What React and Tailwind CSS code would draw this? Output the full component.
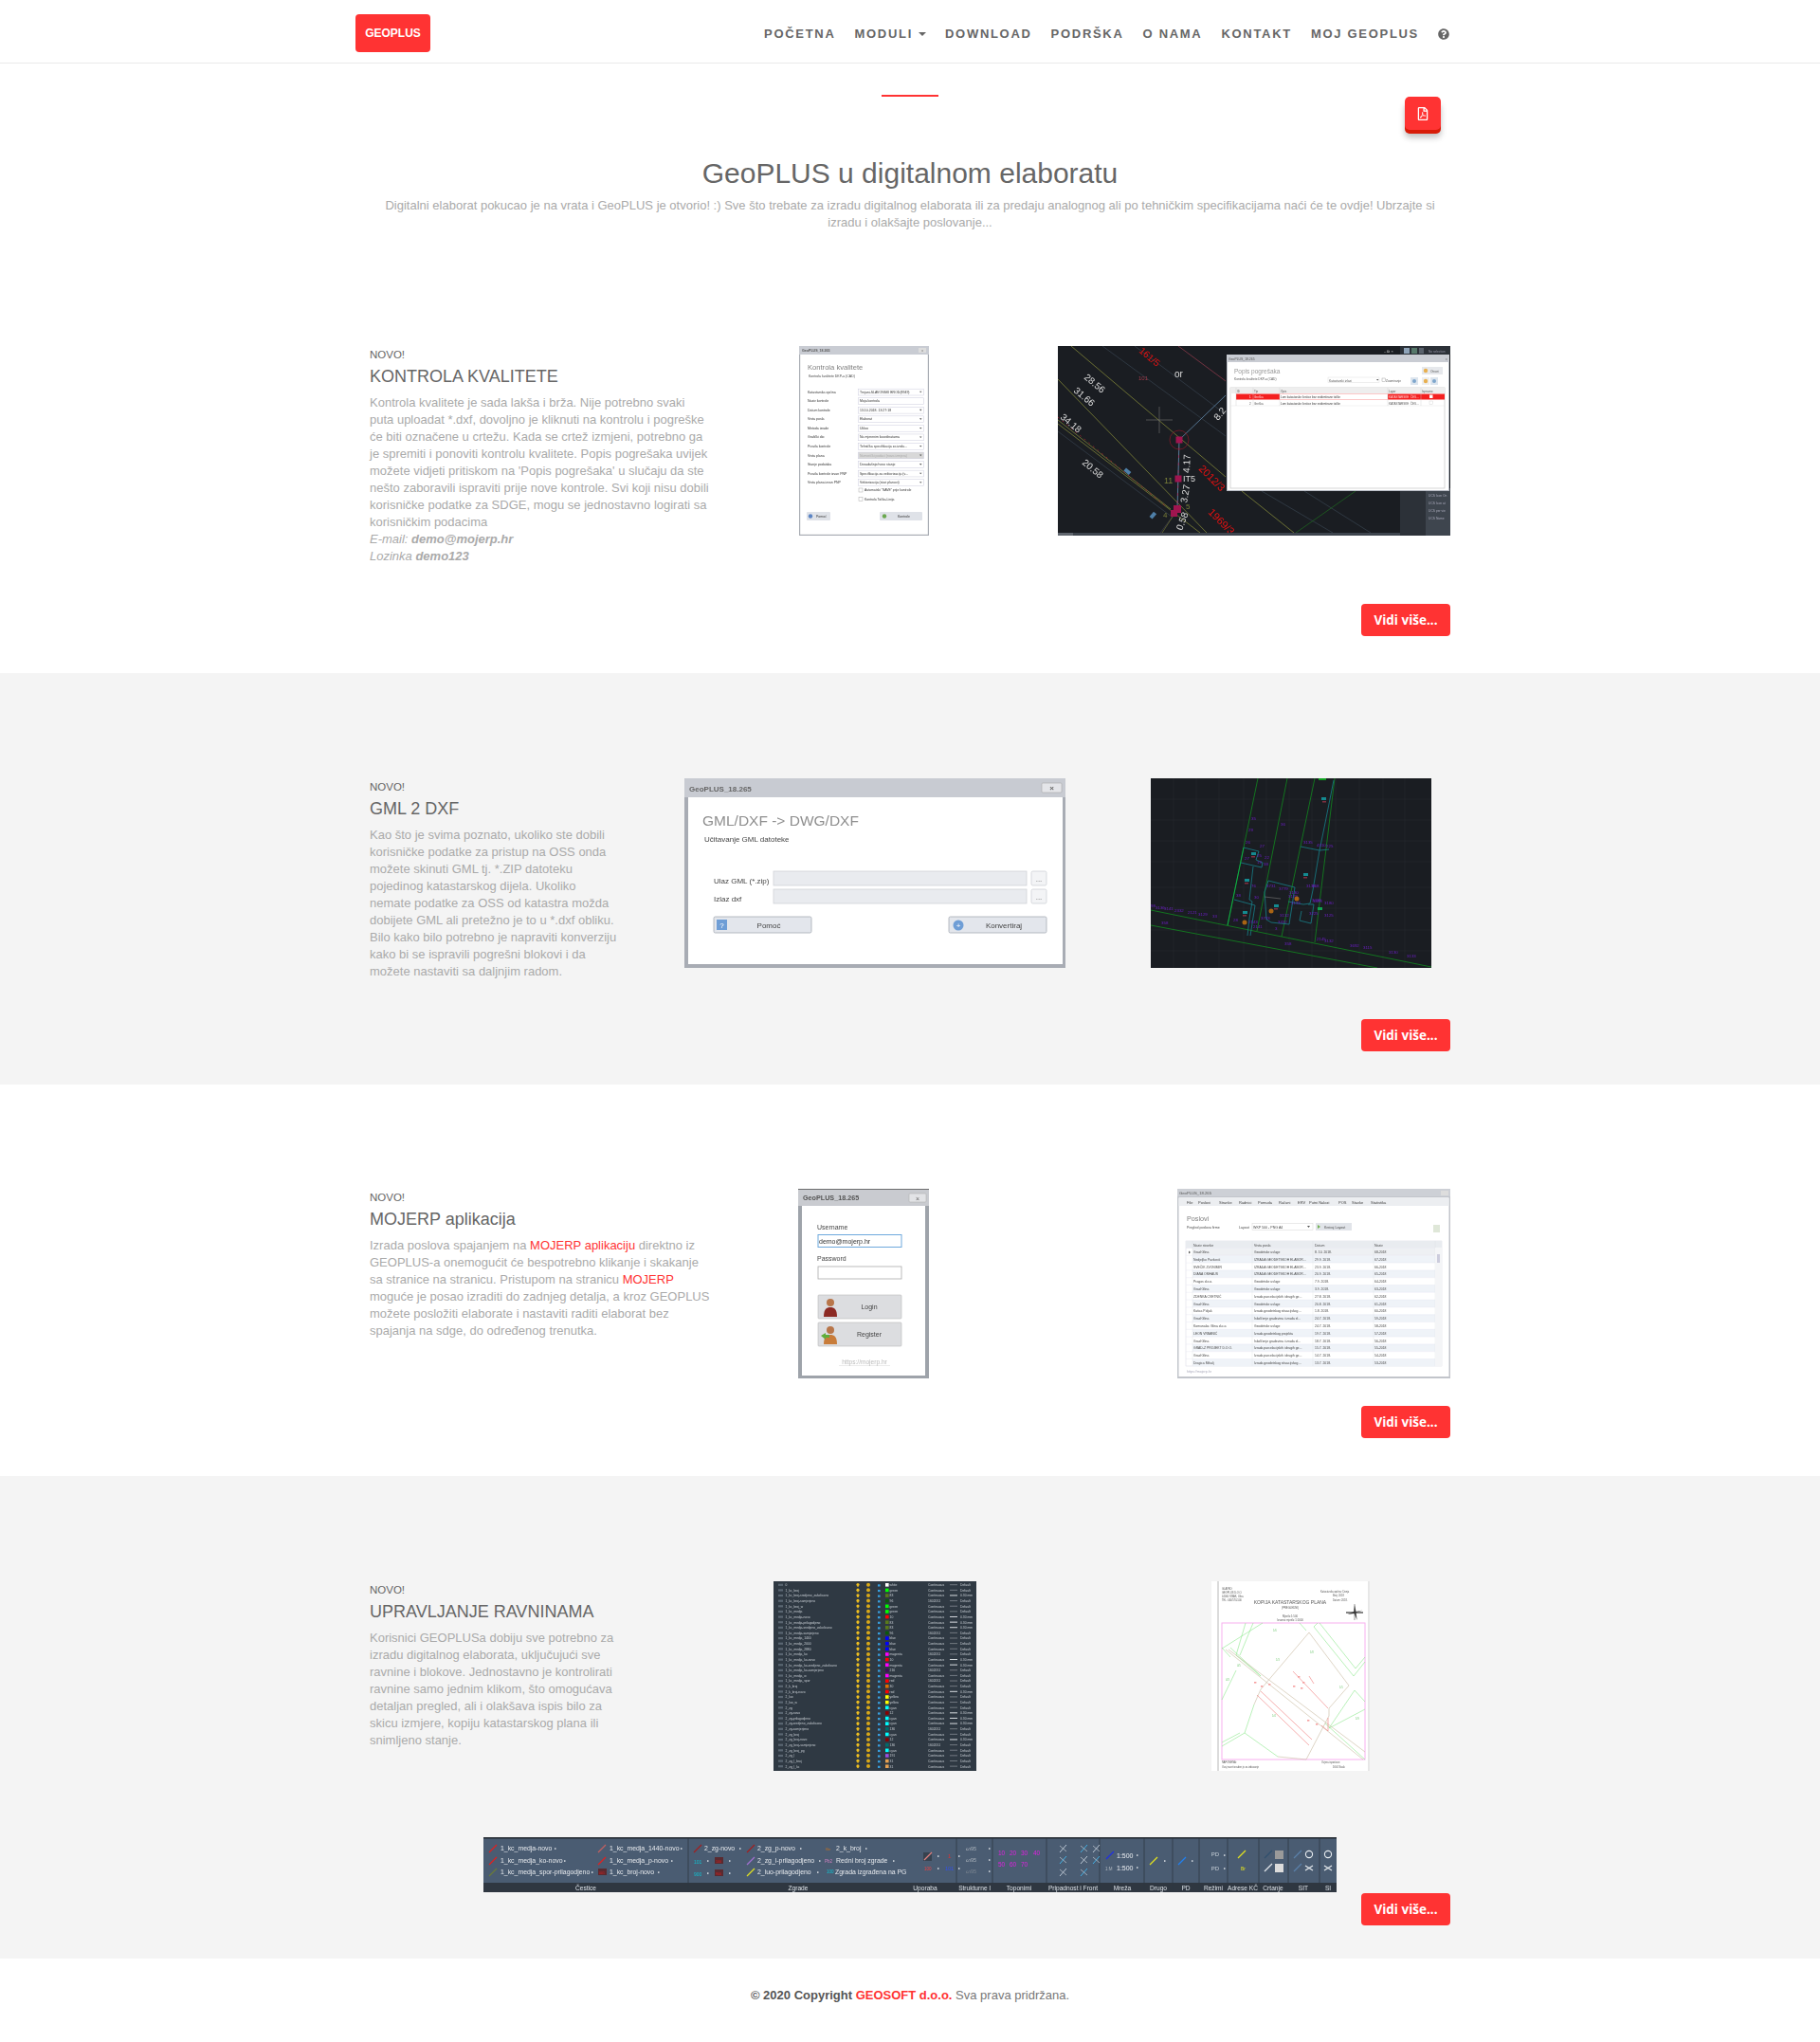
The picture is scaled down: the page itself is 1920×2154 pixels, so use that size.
import React from "react";
import { FaRegFilePdf, FaQuestionCircle } from "react-icons/fa";

const T = ({ x, y, s = 4, c = "#555", w, a, r, children, o }) => (
  <text x={x} y={y} fontSize={s} fill={c} fontWeight={w} textAnchor={a} opacity={o} transform={r ? `rotate(${r} ${x} ${y})` : undefined}>{children}</text>
);
const L = ({ p, c = "#888", w = 0.6, d }) => (
  <line x1={p[0]} y1={p[1]} x2={p[2]} y2={p[3]} stroke={c} strokeWidth={w} strokeDasharray={d} />
);

function KontrolaShot() {
  const rows = [
    ["Katastarska općina", "Trnjani-SLAVONSKI BROD(8949)", 1],
    ["Naziv kontrole", "Moja kontrola", 0],
    ["Datum kontrole", "13.10.2018. 13:27:18", 1],
    ["Vrsta posla", "Elaborat", 1],
    ["Metoda izrade", "Ukloo", 1],
    ["Grafički dio", "Na mjerenim koordinatama", 1],
    ["Pravila kontrole", "Tehnička specifikacija za izrdu...", 1],
    ["Vrsta plana", "Numerički podaci (nova izmjera)", 2],
    ["Stanje podataka", "Dosadašnje/novo stanje", 1],
    ["Pravila kontrole izvan PNP", "Specifikacija za vektorizaciju (v...", 1],
    ["Vrsta plana izvan PNP", "Vektorizacija (stari planovi)", 1],
  ];
  return (
    <svg viewBox="0 0 137 200" className="block w-[137px] h-[200px] blur-[0.3px]">
      <rect width="137" height="200" fill="#a9adb4" />
      <rect x="0" y="0" width="137" height="9" fill="#c9ccd3" />
      <rect x="1.2" y="9" width="134.6" height="189.8" fill="#fff" />
      <T x="3" y="6" s="3.6" c="#555" w="700">GeoPLUS_18.265</T>
      <rect x="126" y="2" width="8" height="5" fill="#ddd" />
      <T x="130" y="6" s="3.5" a="middle" c="#666">x</T>
      <T x="9" y="25" s="7.6" c="#808080">Kontrola kvalitete</T>
      <T x="10" y="33" s="3.5" c="#444">Kontrola kvalitete DKP-a (CAD)</T>
      {rows.map((r, i) => {
        const y = 48.5 + i * 9.55;
        return (
          <g key={i}>
            <T x="9" y={y + 1.2} s="3.5" c="#333">{r[0]}</T>
            <rect x="62.5" y={y - 3.3} width="69" height="6.8" fill={r[2] === 2 ? "#d8d8d8" : "#fff"} stroke="#ccd" strokeWidth="0.5" />
            <T x="64" y={y + 1.2} s="3.5" c={r[2] === 2 ? "#aaa" : "#333"}>{r[1]}</T>
            {r[2] > 0 && <path d={`M127 ${y - 0.8}h2.5l-1.25 1.6z`} fill="#555" />}
          </g>
        );
      })}
      <rect x="63" y="150" width="4" height="4" fill="#fff" stroke="#aaa" strokeWidth="0.5" />
      <T x="69" y="153.4" s="3.4" c="#333">Automatski "SAVE" prije kontrole</T>
      <rect x="63" y="159.6" width="4" height="4" fill="#fff" stroke="#aaa" strokeWidth="0.5" />
      <T x="69" y="163" s="3.4" c="#333">Kontrola Točka-Linija</T>
      <rect x="8" y="175" width="25" height="9" rx="1" fill="#dfe2e8" />
      <circle cx="12" cy="179.5" r="2.2" fill="#5b84c4" />
      <T x="18" y="181" s="3.5" c="#333">Pomoć</T>
      <rect x="85" y="175" width="45" height="9" rx="1" fill="#dfe2e8" />
      <circle cx="90" cy="179.5" r="2.2" fill="#6aa84f" />
      <T x="104" y="181" s="3.5" c="#333">Kontrole</T>
    </svg>
  );
}

function CadShot() {
  const labels = [
    ["28.56", 41, 34, 40], ["31.66", 30, 48, 40], ["34.18", 16, 76, 40], ["20.58", 39, 124, 40],
  ];
  return (
    <svg viewBox="0 0 414 200" className="block w-[414px] h-[200px] blur-[0.3px]">
      <rect width="414" height="200" fill="#1a1d22" />
      <L p={[14, 0, 177, 138]} c="#7f8438" w={0.8} />
      <L p={[194, 153, 249, 197]} c="#7f8438" w={0.8} />
      <L p={[0, 35, 157, 197]} c="#7f8438" w={0.8} />
      <L p={[0, 78, 119, 172]} c="#7f8438" w={0.8} />
      <L p={[0, 82, 150, 197]} c="#7f8438" w={0.8} />
      <L p={[47, 0, 177, 95]} c="#3d4a58" />
      <L p={[81, 0, 177, 72]} c="#3d4a58" />
      <L p={[127, 0, 177, 37]} c="#8a3a4a" w={0.8} />
      <L p={[0, 90, 120, 180]} c="#3d4a58" />
      <L p={[0, 75, 115, 170]} c="#a02030" w={0.8} d="2 4" />
      <L p={[215, 153, 290, 197]} c="#3d4a58" />
      <L p={[260, 153, 330, 197]} c="#3d4a58" />
      <L p={[251, 197, 314, 153]} c="#1e7a1e" />
      <L p={[107, 64, 107, 92]} c="#777" />
      <L p={[93, 78, 121, 78]} c="#777" />
      <L p={[128, 99, 177, 52]} c="#5b7f9e" w={0.9} />
      <L p={[128, 99, 126, 172]} c="#5b7f9e" w={1} />
      <L p={[128, 99, 126, 172]} c="#c02050" w={0.6} d="3 5" />
      <L p={[123, 177, 108, 197]} c="#445" />
      <L p={[123, 177, 110, 197]} c="#7f8438" />
      <circle cx="128" cy="99" r="10" fill="none" stroke="#8a1a2a" strokeWidth="0.7" />
      <rect x="124.5" y="95.5" width="7" height="7" fill="#a0154f" />
      <rect x="123.5" y="136.5" width="7" height="7" fill="#a0154f" />
      <rect x="122" y="168" width="8" height="8" fill="#a0154f" />
      <rect x="119" y="173" width="7" height="7" fill="#a0154f" />
      <rect x="70" y="130" width="7" height="4" fill="#4e7fa8" transform="rotate(40 73 132)" />
      <rect x="97" y="177" width="7" height="4" fill="#4e7fa8" transform="rotate(-50 100 179)" />
      {labels.map((l) => <T key={l[0]} x={l[1] - 14} y={l[2]} s="10" c="#ddd" r={l[3]}>{l[0]}</T>)}
      <T x="85" y="36" s="6" c="#a03a4a">101</T>
      <T x="123" y="33" s="10" c="#ddd">or</T>
      <T x="85" y="6" s="10" c="#e81010" r="40">161/5</T>
      <T x="169" y="79" s="10" c="#ddd" r="-50">8.2</T>
      <T x="139" y="134" s="10" c="#ddd" r="-88">4.17</T>
      <T x="136" y="166" s="10" c="#ddd" r="-80">3.27</T>
      <T x="131" y="195" s="10" c="#ddd" r="-70">0.58</T>
      <T x="112" y="145" s="9" c="#7a7f3a">11</T>
      <T x="132" y="143" s="9" c="#ddd">IT5</T>
      <T x="135" y="172" s="8" c="#7a7f3a">5</T>
      <T x="111" y="181" s="8" c="#7a7f3a">4</T>
      <T x="148" y="130" s="11" c="#e81010" r="45">2012/3</T>
      <T x="158" y="176" s="11" c="#e81010" r="45">1969/3</T>
      <rect x="361" y="150" width="53" height="50" fill="#3e454e" />
      <rect x="361" y="150" width="27" height="50" fill="#2c3138" />
      <rect y="197" width="361" height="3" fill="#3e454e" />
      <rect x="0" y="197" width="16" height="3" fill="#60666e" />
      <T x="391" y="159" s="3.3" c="#aab">UCS Icon On</T>
      <T x="391" y="167" s="3.3" c="#aab">UCS Icon at</T>
      <T x="391" y="175" s="3.3" c="#aab">UCS per vie</T>
      <T x="391" y="183" s="3.3" c="#aab">UCS Name</T>
      <rect x="361" y="0" width="53" height="9" fill="#2c3138" />
      <rect x="365" y="2" width="6" height="6" fill="#8ea3b8" />
      <rect x="373" y="2" width="6" height="6" fill="#56786a" />
      <rect x="381" y="2" width="5" height="6" fill="#5a626c" />
      <T x="391" y="7" s="3.2" c="#99a">No selection</T>
      <T x="344" y="7" s="4" c="#ccc">– ⧉ ×</T>

      <rect x="178" y="9" width="235" height="144" fill="#b8bcc4" />
      <rect x="179" y="17" width="233" height="135" fill="#fff" />
      <rect x="178" y="9" width="235" height="8" fill="#c9ccd3" />
      <T x="180" y="15" s="3.4" c="#555">GeoPLUS_18.265</T>
      <T x="409" y="15" s="3.2" c="#666">x</T>
      <T x="186" y="29" s="6.5" c="#999">Popis pogrešaka</T>
      <T x="186" y="36" s="3.2" c="#555">Kontrola kvalitete DKP-a (CAD)</T>
      <rect x="285" y="33" width="54" height="5.5" fill="#fff" stroke="#ddd" strokeWidth="0.5" />
      <T x="286" y="37.5" s="3.2" c="#555">Katastarski izlazi</T>
      <path d="M336 35h2.5l-1.25 1.6z" fill="#555" />
      <rect x="342" y="34" width="3.5" height="3.5" fill="#fff" stroke="#888" strokeWidth="0.4" />
      <T x="346" y="37.5" s="3.2" c="#555">Zoomiranje</T>
      <rect x="372" y="33" width="8" height="8" fill="#dde5ee" /><circle cx="376" cy="37" r="2" fill="#7ea6cc" />
      <rect x="384" y="33" width="8" height="8" fill="#eee" /><circle cx="388" cy="37" r="2.2" fill="#e8b050" />
      <rect x="393" y="33" width="8" height="8" fill="#dde5ee" /><circle cx="397" cy="37" r="2" fill="#7ea6cc" />
      <rect x="384" y="22" width="22" height="8" fill="#e6e8ec" /><circle cx="388" cy="26" r="2.2" fill="#e8b050" />
      <T x="393" y="27.5" s="3.2" c="#555">Otvori</T>
      <rect x="182" y="44" width="226" height="106" fill="#fff" stroke="#ccc" strokeWidth="0.8" />
      <rect x="182" y="44" width="226" height="6" fill="#eee" />
      {[["ID", 189], ["Tip", 207], ["Opis", 235], ["Layer", 349], ["Ispravno", 384]].map((h) => <T key={h[0]} x={h[1]} y="49" s="3" c="#555">{h[0]}</T>)}
      <rect x="188" y="50.5" width="220" height="6" fill="#f42020" />
      <rect x="234" y="50.5" width="114" height="6" fill="#fff" />
      <T x="202" y="55" s="3" c="#fff">1</T><T x="207" y="55" s="3" c="#fdd">Greška</T>
      <T x="235" y="55" s="3" c="#333">Lom katastarske čestice bez evidentirane točke</T>
      <T x="349" y="55" s="3" c="#fdd">KATASTARSKE_ČES...</T>
      <rect x="392" y="51.5" width="3.5" height="3.5" fill="#fff" />
      <T x="202" y="61.5" s="3" c="#555">2</T><T x="207" y="61.5" s="3" c="#555">Greška</T>
      <T x="235" y="61.5" s="3" c="#333">Lom katastarske čestice bez evidentirane točke</T>
      <T x="349" y="61.5" s="3" c="#555">KATASTARSKE_ČES...</T>
      <rect x="392" y="58" width="3.5" height="3.5" fill="#fff" stroke="#ccc" strokeWidth="0.4" />
      <L p={[182, 63, 408, 63]} c="#e5e5e5" w={0.5} />
      {[188, 206, 234, 348, 383].map((x) => <L key={x} p={[x, 44, x, 63]} c="#ccc" w={0.4} />)}
    </svg>
  );
}

function GmlShot() {
  const field = (y) => (
    <g>
      <rect x="94" y={y} width="267" height="15" fill="#e9ebef" stroke="#d0d3d8" strokeWidth="0.8" />
      <rect x="366" y={y} width="16" height="15" rx="1.5" fill="#f3f4f6" stroke="#c8ccd2" strokeWidth="0.7" />
      <T x="374" y={y + 11} s="8" a="middle" c="#666">...</T>
    </g>
  );
  const btn = (x, w, label, tx) => (
    <g>
      <rect x={x} y="146" width={w} height="17" rx="1.5" fill="#e3e6ec" stroke="#a6abb4" strokeWidth="0.8" />
      <T x={tx} y="158" s="8" c="#444" a="middle">{label}</T>
    </g>
  );
  return (
    <svg viewBox="0 0 402 200" className="block w-[402px] h-[200px] blur-[0.25px]">
      <rect width="402" height="200" fill="#a8acb4" />
      <rect width="402" height="20" fill="#c8cbd2" />
      <rect x="4" y="20" width="395" height="176" fill="#fff" />
      <T x="5" y="13.5" s="8" c="#666" w="700">GeoPLUS_18.265</T>
      <rect x="377" y="5" width="21" height="10" rx="1" fill="#e4e5e9" stroke="#aaa" strokeWidth="0.6" />
      <T x="387.5" y="13" s="8" c="#666" a="middle" w="700">×</T>
      <T x="19" y="50" s="15.5" c="#8f8f8f">GML/DXF -&gt; DWG/DXF</T>
      <T x="21" y="67" s="8" c="#444">Učitavanje GML datoteke</T>
      <T x="31" y="111" s="8" c="#444">Ulaz GML (*.zip)</T>
      <T x="31" y="130" s="8" c="#444">Izlaz dxf</T>
      {field(98)}
      {field(117)}
      {btn(31, 103, "Pomoć", 89)}
      <rect x="34" y="149" width="11" height="11" fill="#6f9ed6" />
      <T x="39.5" y="158" s="8" c="#fff" a="middle">?</T>
      {btn(279, 103, "Konvertiraj", 337)}
      <circle cx="289" cy="155" r="5.5" fill="#6f9ed6" />
      <T x="289" y="158" s="8" c="#fff" a="middle">+</T>
    </svg>
  );
}

function GmlDrawing() {
  const nums = [[0, 136, "98"], [5, 138, "3136"], [14, 139, "3141"], [25, 141, "2332"], [39, 143, "2121"], [50, 145, "3129"], [65, 147, "33"], [11, 154, "358"], [87, 151, "28"], [103, 153, "2143"], [108, 158, "2141"], [131, 160, "3"], [136, 146, "3132"], [141, 176, "358"], [175, 171, "2145"], [183, 173, "3132"], [210, 178, "3692"], [224, 180, "3115"], [251, 185, "3130"], [270, 189, "3133"], [106, 44, "35"], [137, 50, "36"], [103, 56, "29"], [100, 69, "26"], [115, 73, "27"], [112, 83, "25"], [120, 85, "22"], [99, 86, "27"], [112, 90, "19"], [119, 92, "38"], [90, 125, "38"], [122, 115, "3731"], [135, 118, "3779"], [146, 122, "3130"], [145, 126, "3129"], [109, 127, "30"], [161, 69, "3135"], [175, 72, "4310"], [185, 73, "225"], [164, 115, "3133"], [170, 115, "368"], [170, 130, "3438"], [148, 133, "3133"], [171, 131, "3493"], [183, 133, "3180"], [167, 144, "3225"], [183, 146, "3125"], [116, 149, "3733"], [134, 153, "3432"], [106, 115, "76"]];
  return (
    <svg viewBox="0 0 296 200" className="block w-[296px] h-[200px] blur-[0.2px]">
      <rect width="296" height="200" fill="#1a1d22" />
      {[24, 48, 72, 98, 122, 146, 170, 195, 220, 245, 268].map((x) => <L key={x} p={[x, 0, x, 200]} c="#262a30" w={0.6} />)}
      {[22, 44, 66, 88, 115, 137, 160, 182].map((y) => <L key={y} p={[0, y, 296, y]} c="#262a30" w={0.6} />)}
      <L p={[113, 0, 81, 155]} c="#128a20" w={0.8} />
      <L p={[98, 73, 81, 155]} c="#0fbf50" w={0.8} />
      <L p={[144, 0, 112, 161]} c="#128a20" w={0.8} />
      <L p={[173, 0, 138, 167]} c="#128a20" w={0.8} />
      <L p={[194, 0, 173, 173]} c="#128a20" w={0.8} />
      <L p={[0, 139, 296, 199]} c="#128a20" w={0.8} />
      <L p={[0, 155, 239, 200]} c="#128a20" w={0.8} />
      <g fill="none" stroke="#17808a" strokeWidth="0.8">
        <path d="M98 73l16 4-3 9 7 3-1 5-22-5" />
        <path d="M108 93l-4 35 3 2-3 18-2 18" />
        <path d="M88 128l22 6-5 32" />
        <path d="M120 120l4-12 28 7-6 39-19-2-5-3z" />
        <path d="M158 72l20 4-7 42-3 14-7 1-16-3" />
        <path d="M178 76l10-1" />
        <path d="M166 133l6 0-3 20-12-3 2-10" />
        <path d="M193 2l-10 50-5 24" />
      </g>
      <L p={[120, 125, 137, 127]} c="#777" w={0.6} />
      {nums.map((n, i) => <T key={i} x={n[0]} y={n[1]} s="4.4" c="#6a1ec0">{n[2]}</T>)}
      <rect x="106" y="78" width="5" height="3" fill="#148a90" /><rect x="106" y="82" width="4" height="1.5" fill="#803040" />
      <rect x="99" y="106" width="5" height="3" fill="#148a90" /><rect x="99" y="110" width="4" height="1.5" fill="#803040" />
      <rect x="97" y="140" width="5" height="3" fill="#148a90" /><rect x="97" y="144" width="4" height="1.5" fill="#803040" />
      <rect x="130" y="133" width="5" height="3" fill="#148a90" /><rect x="130" y="137" width="4" height="1.5" fill="#803040" />
      <rect x="161" y="100" width="5" height="3" fill="#148a90" /><rect x="161" y="104" width="4" height="1.5" fill="#803040" />
      <rect x="180" y="20" width="5" height="3" fill="#148a90" /><rect x="181" y="24" width="4" height="1.5" fill="#803040" />
      <rect x="176" y="136" width="5" height="3" fill="#10a050" />
      <rect x="177" y="0" width="8" height="2" fill="#10a020" />
      <circle cx="99" cy="152" r="2.5" fill="#a86414" /><circle cx="127" cy="140" r="2.5" fill="#a86414" /><circle cx="154" cy="127" r="2.5" fill="#a86414" />
    </svg>
  );
}

function LoginShot() {
  const btn = (y, label, c) => (
    <g>
      <rect x="21" y={y} width="88" height="25" rx="1" fill="#dcdde0" stroke="#bbb" strokeWidth="0.6" />
      <circle cx="34" cy={y + 8} r="4" fill="#b8764a" />
      <path d={`M27 ${y + 23}c0-8 3-10 7-10s7 2 7 10z`} fill={c} />
      <T x="75" y={y + 15} s="7" c="#444" a="middle">{label}</T>
    </g>
  );
  return (
    <svg viewBox="0 0 138 200" className="block w-[138px] h-[200px] blur-[0.25px]">
      <rect width="138" height="200" fill="#9ea3aa" />
      <rect width="138" height="18" fill="#c9cbd0" />
      <rect y="0" width="138" height="0.8" fill="#555" />
      <rect x="4" y="18" width="130" height="179" fill="#fff" />
      <T x="5" y="12" s="7.2" c="#555" w="700">GeoPLUS_18.265</T>
      <rect x="117" y="5" width="18" height="9" rx="1" fill="#e2e3e6" stroke="#aaa" strokeWidth="0.5" />
      <T x="126" y="12.5" s="7" c="#666" a="middle">×</T>
      <T x="20" y="43" s="7" c="#444">Username</T>
      <rect x="21" y="48.5" width="88" height="13" fill="#fff" stroke="#6ea9dd" strokeWidth="1" />
      <T x="22" y="58" s="7" c="#333">demo@mojerp.hr</T>
      <T x="20" y="76" s="7" c="#444">Password</T>
      <rect x="21" y="82" width="88" height="13" fill="#fff" stroke="#aaa" strokeWidth="0.8" />
      {btn(112, "Login", "#8c2a24")}
      {btn(141, "Register", "#c87c3a")}
      <path d="M24 155l5-3v2h4v3h-4v2z" fill="#5fae3a" />
      <T x="70" y="185" s="6.6" c="#bbb" a="middle">https://mojerp.hr</T>
      <L p={[43, 186.5, 97, 186.5]} c="#ccc" w={0.4} />
    </svg>
  );
}

function PosloviShot() {
  const rows = [
    ["Grad Glina", "Geodetske usluge", "8. 10. 2018.", "68-2018"],
    ["Nedjeljko Pavković", "IZRADA GEODETSKOH ELABOR...", "29.9. 2018.", "67-2018"],
    ["SVEČIK ZVONIMIR", "IZRADA GEODETSKOH ELABOR...", "23.9. 2018.", "66-2018"],
    ["DIANA OMHAUS", "IZRADA GEODETSKOH ELABOR...", "20.9. 2018.", "65-2018"],
    ["Pragos d.o.o.", "Geodetske usluge", "7.9. 2018.", "64-2018"],
    ["Grad Glina", "Geodetske usluge", "3.9. 2018.", "63-2018"],
    ["ZDENKA CVETNIĆ", "Izrada parcelacijskih i drugih ge...", "27.8. 2018.", "62-2018"],
    ["Grad Glina", "Geodetske usluge", "20.8. 2018.", "61-2018"],
    ["Katica Poljak", "Izrada geodetskog situacijskog ...", "1.8. 2018.", "60-2018"],
    ["Grad Glina", "Iskolčenje građevina i izrada el...", "24.7. 2018.", "59-2018"],
    ["Komunalac Glina d.o.o.", "Geodetske usluge", "24.7. 2018.", "58-2018"],
    ["LEON VRBANIĆ", "Izrada geodetskog projekta", "19.7. 2018.", "57-2018"],
    ["Grad Glina", "Iskolčenje građevina i izrada el...", "18.7. 2018.", "56-2018"],
    ["GRAD-Z PROJEKT D.O.O.", "Izrada parcelacijskih i drugih ge...", "15.7. 2018.", "55-2018"],
    ["Grad Glina", "Izrada parcelacijskih i drugih ge...", "14.7. 2018.", "54-2018"],
    ["Dragica Mrkalj", "Izrada geodetskog situacijskog ...", "13.7. 2018.", "53-2018"],
  ];
  const menu = [["File", 10], ["Poslovi", 22], ["Stranke", 44], ["Radnici", 65], ["Pomuda", 85], ["Računi", 107], ["ERV", 127], ["Putni Nalozi", 139], ["POS", 170], ["Stavke", 184], ["Statistika", 204]];
  return (
    <svg viewBox="0 0 288 200" className="block w-[288px] h-[200px] blur-[0.25px]">
      <rect width="288" height="200" fill="#c2c5cb" />
      <rect x="1.5" y="10" width="285" height="188" fill="#fff" />
      <rect width="288" height="8" fill="#cdd0d6" />
      <rect x="1.5" y="9" width="285" height="9" fill="#eceef1" />
      <T x="2" y="6" s="4.2" c="#555">GeoPLUS_18.265</T>
      <rect x="278" y="2" width="8" height="5" fill="#ddd" />
      {menu.map((m) => <T key={m[0]} x={m[1]} y="15.5" s="4" c="#444">{m[0]}</T>)}
      <T x="10" y="34" s="7.2" c="#808080">Poslovi</T>
      <T x="10" y="42" s="3.6" c="#444">Pregled poslova firme</T>
      <T x="65" y="42" s="3.6" c="#444">Layout</T>
      <rect x="79" y="36.5" width="64" height="7" fill="#fff" stroke="#ccc" strokeWidth="0.4" />
      <T x="80" y="42" s="3.6" c="#444">WKP 500 - PNG A4</T>
      <path d="M137 39h3l-1.5 2z" fill="#555" />
      <rect x="146" y="36" width="38" height="8" fill="#e1e4e9" />
      <path d="M148 38v4l3-2z" fill="#70b050" />
      <T x="155" y="42" s="3.6" c="#444">Kreiraj Layout</T>
      <rect x="270" y="38" width="7" height="8" fill="#dfe7d8" />
      <rect x="9" y="55" width="270" height="132" fill="#fff" stroke="#ccd" strokeWidth="0.4" />
      <rect x="9" y="55" width="270" height="7.5" fill="#e9ecf0" />
      {[["Naziv stranke", 17], ["Vrsta posla", 81], ["Datum", 145], ["Naziv", 208]].map((h) => <T key={h[0]} x={h[1]} y="60.5" s="3.5" c="#444">{h[0]}</T>)}
      {rows.map((r, i) => {
        const y = 62.5 + i * 7.8;
        return (
          <g key={i}>
            <rect x="16" y={y} width="256" height="7.8" fill={i === 0 ? "#eef0f3" : i % 2 ? "#eff3f8" : "#fff"} />
            <T x="17" y={y + 5.5} s="3.4" c="#444">{r[0]}</T>
            <T x="81" y={y + 5.5} s="3.4" c="#444">{r[1]}</T>
            <T x="145" y={y + 5.5} s="3.4" c="#444">{r[2]}</T>
            <T x="208" y={y + 5.5} s="3.4" c="#444">{r[3]}</T>
            <L p={[9, y, 272, y]} c="#dde" w={0.3} />
          </g>
        );
      })}
      {[16, 79, 143, 207, 272].map((x) => <L key={x} p={[x, 55, x, 187]} c="#d5d8de" w={0.3} />)}
      <rect x="272" y="62" width="7" height="125" fill="#f4f5f7" />
      <rect x="274" y="69" width="3" height="9" fill="#ccd" />
      <path d="M12 65.5l2 1.5-2 1.5z" fill="#555" />
      <T x="10" y="194" s="3.6" c="#aab">https://mojerp.hr</T>
    </svg>
  );
}

function LayersShot() {
  const rows = [
    ["0", "#fff", "white", 0], ["1_kc_broj", "#0f0", "green", 0], ["1_kc_broj-sredjeno_zakolicano", "#5a7a1a", "83", 1], ["1_kc_broj-samjerjeno", "#0a5a0a", "96", 2],
    ["1_kc_broj_w", "#0f0", "green", 0], ["1_kc_medja", "#0f0", "green", 0], ["1_kc_medja-novo", "#f00", "10", 1], ["1_kc_medja-prilagodjeno", "#5a7a1a", "83", 1],
    ["1_kc_medja-sredjeno_zakolicano", "#5a7a1a", "83", 1], ["1_kc_medja-samjerjeno", "#0a5a0a", "96", 2], ["1_kc_medja_1440", "#00f", "blue", 0], ["1_kc_medja_2000", "#00f", "blue", 0],
    ["1_kc_medja_2880", "#00f", "blue", 0], ["1_kc_medja_ko", "#f0f", "magenta", 2], ["1_kc_medja_ko-novo", "#f00", "10", 1], ["1_kc_medja_ko-sredjeno_zakolicano", "#f0f", "magenta", 1],
    ["1_kc_medja_ko-samjerjeno", "#40105a", "216", 3], ["1_kc_medja_w", "#f0f", "magenta", 0], ["1_kc_medja_spor", "#f00", "red", 2], ["2_k_broj", "#e07000", "30", 0],
    ["2_k_broj-novo", "#f00", "red", 1], ["2_luo", "#ff0", "yellow", 0], ["2_luo_w", "#ff0", "yellow", 0], ["2_zg", "#0ff", "cyan", 0],
    ["2_zg-novo", "#8a0000", "12", 1], ["2_zg-prilagodjeno", "#0ff", "cyan", 1], ["2_zg-sredjeno_zakolicano", "#0ff", "cyan", 1], ["2_zg-samjerjeno", "#006a6a", "136", 2],
    ["2_zg_broj", "#0ff", "cyan", 0], ["2_zg_broj-novo", "#8a0000", "12", 1], ["2_zg_broj-samjerjeno", "#006a6a", "136", 2], ["2_zg_broj_pg", "#0ff", "cyan", 0],
    ["2_zg_l", "#9a50e0", "191", 0], ["2_zg_l_broj", "#e8a050", "31", 0], ["2_zg_l_kc", "#e8a050", "31", 0],
  ];
  return (
    <svg viewBox="0 0 214 200" className="block w-[214px] h-[200px] blur-[0.3px]">
      <rect width="214" height="200" fill="#2f3943" />
      {rows.map((r, i) => {
        const y = 3.7 + i * 5.63;
        return (
          <g key={i}>
            <rect x="5" y={y - 1} width="5" height="2.2" fill="#5a6672" />
            <T x="12.6" y={y + 1.4} s="3.3" c="#c8ced4">{r[0]}</T>
            <circle cx="89" cy={y - 0.2} r="1.6" fill="#f0c020" />
            <rect x="88.2" y={y + 1} width="1.6" height="1" fill="#f0c020" />
            <circle cx="100" cy={y} r="2" fill="#d8a818" />
            <rect x="110" y={y - 0.4} width="2.6" height="2.2" fill="#38a0e0" />
            <rect x="118" y={y - 1.7} width="3.6" height="3.6" fill={r[1]} />
            <T x="122.5" y={y + 1.4} s="3.4" c="#c8ced4">{r[2]}</T>
            <T x="163" y={y + 1.4} s="3.4" c="#c8ced4">{r[3] >= 2 ? "1602051" : "Continuous"}</T>
            <L p={[186, y, 194, y]} c="#d8dce0" w={r[3] === 1 ? 1 : 0.4} />
            <T x="197" y={y + 1.4} s="3.4" c="#c8ced4">{r[3] === 1 ? "0.30 mm" : "Default"}</T>
          </g>
        );
      })}
    </svg>
  );
}

function PlanShot() {
  const g = "#8be88b", t = "#c8b8a0", r = "#f07878";
  const lines = [
    [g, 11, 71, 54, 44], [g, 36, 44, 26, 78], [g, 26, 78, 52, 100], [g, 44, 44, 30, 78], [g, 93, 44, 100, 52], [g, 112, 44, 108, 48], [g, 108, 48, 150, 100], [g, 150, 100, 162, 85], [g, 114, 44, 152, 92], [g, 152, 92, 162, 80], [g, 52, 100, 20, 70], [g, 11, 70, 20, 80], [g, 26, 94, 11, 125],
    [g, 151, 115, 162, 127], [g, 151, 115, 124, 155], [g, 124, 155, 162, 135], [g, 11, 174, 35, 160], [g, 35, 160, 70, 185], [g, 35, 160, 45, 130], [g, 11, 170, 30, 160], [g, 120, 150, 162, 188],
    [t, 15, 72, 160, 188], [t, 18, 72, 162, 180], [t, 52, 114, 103, 54], [t, 103, 54, 145, 110], [t, 145, 110, 124, 134], [t, 45, 130, 52, 114], [t, 124, 142, 100, 188], [t, 124, 134, 124, 142], [t, 70, 185, 100, 188],
    [r, 86, 95, 123, 134], [r, 48, 120, 103, 173], [r, 52, 116, 106, 167], [r, 123, 144, 123, 158], [r, 116, 152, 123, 158], [r, 103, 100, 108, 108],
  ];
  const nums = [[65, 53, "1/6"], [104, 76, "1/8"], [15, 105, "4/3"], [64, 143, "1/4"], [135, 113, "1/5"], [152, 146, "1/9"], [27, 90, "4/5"], [68, 84, "1/3"]];
  return (
    <svg viewBox="0 0 167 200" className="block w-[167px] h-[200px] blur-[0.3px]">
      <rect width="167" height="200" fill="#fff" />
      <L p={[7, 0, 7, 200]} c="#999" w={0.7} />
      <L p={[166, 0, 166, 200]} c="#bbb" w={0.7} />
      <T x="11" y="9" s="2.6">GLAVNO:</T><T x="11" y="13" s="2.6">GEOPLUS D.O.O.</T><T x="11" y="17" s="2.6">44000 SISAK, Ulica</T><T x="11" y="21" s="2.6">TEL: 044/570-500</T>
      <T x="115" y="12" s="2.6">Katastarska općina: Donja</T><T x="128" y="16" s="2.6">Broj: 2018</T><T x="128" y="20.5" s="2.6">Datum: 2018.</T>
      <T x="83" y="24" s="5" a="middle" c="#555">KOPIJA KATASTARSKOG PLANA</T>
      <T x="83" y="29" s="2.8" a="middle">(PREGLEDNI)</T>
      <T x="83" y="38" s="2.8" a="middle">Mjerilo 1:500</T><T x="83" y="41.5" s="2.8" a="middle">Izvorno mjerilo 1:1000</T>
      <path d="M151 25l1.6 7 7-1.6-7 2.6 1 8-3-7-7 1 6.6-3z" fill="#444" />
      <L p={[151, 24, 151, 41]} c="#333" w={0.5} />
      <L p={[142, 33, 160, 33]} c="#333" w={1.2} />
      <rect x="11" y="44" width="151" height="144" fill="none" stroke="#f8b0f0" strokeWidth="1" />
      {lines.map((l, i) => <L key={i} p={l.slice(1)} c={l[0]} w={0.6} />)}
      {nums.map((n, i) => <T key={i} x={n[0]} y={n[1]} s="2.8" c="#7acb7a">{n[2]}</T>)}
      {[[91, 100], [96, 106], [60, 108], [86, 110], [45, 106], [52, 110], [110, 150], [101, 146], [94, 112]].map((n, i) => <rect key={i} x={n[0]} y={n[1]} width="2.4" height="1.6" fill="#f6a0a0" />)}
      <T x="11" y="192" s="2.6">NAPOMENA:</T><T x="11" y="197" s="2.6">Ovaj nacrt izrađen je za izdavanje</T>
      <T x="116" y="192" s="2.6">Ovjera ispostave</T><T x="128" y="197" s="2.6">DGU Sisak</T>
    </svg>
  );
}

function ToolbarShot() {
  const divs = [216, 499, 537, 594, 650, 697, 727, 755, 785, 818, 849, 882];
  const labels = [["Čestice", 108], ["Zgrade", 332], ["Uporaba", 466], ["Strukturne l", 518], ["Toponimi", 565], ["Pripadnost i Front", 622], ["Mreža", 674], ["Drugo", 712], ["PD", 741], ["Režimi", 770], ["Adrese KČ", 801], ["Crtanje", 833], ["SIT", 865], ["SI", 891]];
  const slash = (x, y, c) => <L p={[x, y + 4, x + 8, y - 4]} c={c} w={1.2} />;
  const dot = (x, y) => <rect x={x} y={y - 0.7} width="1.5" height="1.5" fill="#dfe3e8" />;
  const items = [
    ["1_kc_medja-novo", 18, 12, "#e02020", 6, 75], ["1_kc_medja_ko-novo", 18, 25, "#e02020", 6, 85], ["1_kc_medja_spor-prilagodjeno", 18, 37, "#6a7a3a", 6, 114],
    ["1_kc_medja_1440-novo", 133, 12, "#c06060", 121, 208], ["1_kc_medja_p-novo", 133, 25, "#e02020", 121, 198], ["1_kc_broj-novo", 133, 37, null, 0, 184],
    ["2_zg-novo", 233, 12, "#a02020", 222, 270], ["2_zg_p-novo", 289, 12, "#a02020", 278, 334], ["2_zg_l-prilagodjeno", 289, 25, "#a070d0", 278, 354], ["2_luo-prilagodjeno", 289, 37, "#e0e020", 278, 352],
    ["2_k_broj", 372, 12, null, 0, 403], ["Redni broj zgrade", 372, 25, null, 0, 432], ["Zgrada izgrađena na PG", 371, 37, null, 0, -1],
  ];
  return (
    <svg viewBox="0 0 900 58" className="block w-[900px] h-[58px] blur-[0.25px]">
      <rect width="900" height="58" fill="#4a5c72" />
      <rect width="900" height="1.5" fill="#20262d" />
      <rect y="48" width="900" height="10" fill="#2f3741" />
      {divs.map((x) => <L key={x} p={[x, 1, x, 58]} c="#2f3741" w={0.8} />)}
      {labels.map((l) => <T key={l[0]} x={l[1]} y="56" s="6.6" c="#dde2e8" a="middle">{l[0]}</T>)}
      {items.map((it) => (
        <g key={it[0]}>
          {it[3] && slash(it[4], it[2], it[3])}
          <T x={it[1]} y={it[2] + 2.4} s="6.9" c="#e8ebef">{it[0]}</T>
          {it[5] > 0 && dot(it[5], it[2])}
        </g>
      ))}
      <rect x="121" y="33" width="9" height="7" fill="#5a2a30" /><T x="122" y="38.5" s="3.5" c="#e02020">001</T>
      <T x="361" y="14" s="3.5" c="#c07020">Kbr</T><T x="360" y="27" s="4.5" c="#d080c0">Pb2</T><T x="362" y="38" s="4.5" c="#10c0d0">100</T>
      <T x="222" y="28" s="5" c="#10c0d0">101</T><T x="222" y="41" s="5" c="#10c0d0">900</T>
      {dot(236, 25)}{dot(259, 25)}{dot(236, 38)}{dot(259, 38)}
      <rect x="244" y="21" width="9" height="7" fill="#5a2a30" /><rect x="244" y="34" width="9" height="7" fill="#5a2a30" />
      <T x="245" y="27" s="3.5" c="#e02020">100</T><T x="245" y="40" s="3.5" c="#e02020">900</T>
      <rect x="464" y="16" width="9" height="9" fill="#37424f" />{slash(465, 20, "#e08080")}
      <T x="465" y="35" s="4.5" c="#f04040">100</T><T x="487" y="35" s="5.5" c="#3050f0">101</T><T x="490" y="22" s="6" c="#e03030">1</T>
      {dot(479, 20)}{dot(501, 20)}{dot(479, 33)}{dot(501, 33)}
      {[14, 26, 38].map((y, i) => <g key={y}><T x="509" y={y} s="5.5" c={i === 2 ? "#7a8490" : "#a8b0ba"}>ᔕ95</T>{dot(533, y - 2)}</g>)}
      {[["10", 543], ["20", 555], ["30", 567], ["40", 580]].map((n) => <T key={n[0]} x={n[1]} y="19" s="6.5" c="#e020e0">{n[0]}</T>)}
      {[["50", 543], ["60", 555], ["70", 567]].map((n) => <T key={n[0]} x={n[1]} y="31" s="6.5" c="#e020e0">{n[0]}</T>)}
      {[[608, 12], [608, 24], [608, 37], [630, 12], [630, 24], [630, 37], [643, 12], [643, 24]].map((p, i) => (
        <g key={i}><L p={[p[0], p[1] + 4, p[0] + 7, p[1] - 4]} c={i % 2 ? "#40b8f0" : "#c8d4e0"} w={0.9} /><L p={[p[0], p[1] - 3, p[0] + 7, p[1] + 3]} c="#d8dee4" w={0.6} /></g>
      ))}
      {slash(657, 19, "#2030e0")}<T x="668" y="22" s="7" c="#e8ebef">1:500</T>{dot(689, 19)}
      <T x="656" y="35" s="4.5" c="#b0b8c0">1:M</T><T x="668" y="35" s="7" c="#e8ebef">1:500</T>{dot(689, 32)}
      {slash(703, 25, "#e0e020")}{dot(718, 25)}{slash(733, 25, "#2080f0")}{dot(747, 25)}
      <T x="772" y="20" s="6" c="#c8d0d8" a="middle">PD</T><T x="772" y="35" s="6" c="#c8d0d8" a="middle">PD</T>{dot(781, 19)}{dot(781, 33)}
      {slash(796, 18, "#e0e020")}<T x="799" y="35" s="5" c="#e0e020">Br</T>
      {slash(824, 18, "#31506e")}<rect x="835" y="14" width="9" height="9" fill="#9a9a9a" />
      {slash(824, 32, "#e0e4e8")}<rect x="835" y="28" width="9" height="9" fill="#dcdcdc" />
      {slash(855, 18, "#5a80a8")}{slash(855, 32, "#5a80a8")}
      {[871, 891].map((x) => <g key={x}><circle cx={x} cy="18" r="3.6" fill="none" stroke="#e8ecf0" strokeWidth="1.1" /><path d={`M${x - 4} 30l8 5M${x - 4} 35l8-5`} stroke="#e8ecf0" strokeWidth="1.1" /></g>)}
    </svg>
  );
}

const Btn = () => (
  <div className="flex justify-end">
    <a className="flex items-center justify-center w-[94px] h-[34px] rounded-[4px] bg-[#ff3333] text-white font-bold text-[13.5px] font-['Open_Sans',sans-serif]">Vidi više...</a>
  </div>
);

function Text({ title, width, children }) {
  return (
    <div style={{ width }} className="shrink-0">
      <div className="text-[11.5px] leading-[18px] text-[#666]">NOVO!</div>
      <h3 className="mt-[2px] text-[18px] leading-[24px] text-[#666]">{title}</h3>
      <p className="mt-[7px] text-[13px] leading-[18px] text-[#aaa]">{children}</p>
    </div>
  );
}

const NAV = ["POČETNA", "MODULI", "DOWNLOAD", "PODRŠKA", "O NAMA", "KONTAKT", "MOJ GEOPLUS"];

export default function App() {
  return (
    <div className="min-h-[2154px] bg-white font-['Liberation_Sans',Arial,sans-serif]">
      <header className="h-[67px] border-b border-[#eaeaea]">
        <div className="w-[1170px] mx-auto flex items-start justify-between h-[66px] pt-[15px] pr-[6px]">
          <a className="flex items-center justify-center w-[79px] h-[40px] rounded-[4px] bg-[#ff3333] text-white font-bold text-[12px]">GEOPLUS</a>
          <nav className="flex items-center h-[42px] text-[#666] font-bold text-[13px] tracking-[1.7px]">
            {NAV.map((n) => (
              <a key={n} className="flex items-center px-[10px]">
                {n}
                {n === "MODULI" && <span className="ml-[6px] w-0 h-0 border-x-[4px] border-x-transparent border-t-[4px] border-t-[#666]" />}
              </a>
            ))}
            <a className="px-[10px]"><FaQuestionCircle size={12} /></a>
          </nav>
        </div>
      </header>

      <section className="relative w-[1140px] mx-auto pt-[33px] text-center">
        <div className="w-[60px] h-[2px] bg-[#ff3333] mx-auto" />
        <a className="absolute right-[10px] top-[35px] flex items-center justify-center w-[38px] h-[35px] rounded-[5px] bg-[#ff3333] text-white shadow-[0_4px_0_#d81c08,0_8px_6px_rgba(0,0,0,0.25)]">
          <FaRegFilePdf size={14} />
        </a>
        <h1 className="mt-[61px] text-[30px] leading-[40px] text-[#666]">GeoPLUS u digitalnom elaboratu</h1>
        <p className="mt-[5px] text-[13px] leading-[18px] text-[#aaa]">
          Digitalni elaborat pokucao je na vrata i GeoPLUS je otvorio! :) Sve što trebate za izradu digitalnog elaborata ili za predaju analognog ali po tehničkim specifikacijama naći će te ovdje! Ubrzajte si izradu i olakšajte poslovanje...
        </p>
      </section>

      <section className="w-[1140px] mx-auto pt-[121px] pb-[39px]">
        <div className="flex h-[200px]">
          <div className="w-[453px] shrink-0">
            <Text title="KONTROLA KVALITETE" width={360}>
              Kontrola kvalitete je sada lakša i brža. Nije potrebno svaki puta uploadat *.dxf, dovoljno je kliknuti na kontrolu i pogreške će biti označene u crtežu. Kada se crtež izmjeni, potrebno ga je spremiti i ponoviti kontrolu kvalitete. Popis pogrešaka uvijek možete vidjeti pritiskom na 'Popis pogrešaka' u slučaju da ste nešto zaboravili ispraviti prije nove kontrole. Svi koji nisu dobili korisničke podatke za SDGE, mogu se jednostavno logirati sa korisničkim podacima
              <br /><i>E-mail: <b>demo@mojerp.hr</b></i>
              <br /><i>Lozinka <b>demo123</b></i>
            </Text>
          </div>
          <KontrolaShot />
          <div className="ml-auto"><CadShot /></div>
        </div>
        <div className="mt-[72px]"><Btn /></div>
      </section>

      <section className="bg-[#f4f4f4] pt-[111px] pb-[35px]">
        <div className="w-[1140px] mx-auto">
          <div className="flex h-[200px]">
            <div className="w-[332px] shrink-0">
              <Text title="GML 2 DXF" width={262}>
                Kao što je svima poznato, ukoliko ste dobili korisničke podatke za pristup na OSS onda možete skinuti GML tj. *.ZIP datoteku pojedinog katastarskog dijela. Ukoliko nemate podatke za OSS od katastra možda dobijete GML ali pretežno je to u *.dxf obliku. Bilo kako bilo potrebno je napraviti konverziju kako bi se ispravili pogrešni blokovi i da možete nastaviti sa daljnjim radom.
              </Text>
            </div>
            <GmlShot />
            <div className="ml-[90px]"><GmlDrawing /></div>
          </div>
          <div className="mt-[54px]"><Btn /></div>
        </div>
      </section>

      <section className="w-[1140px] mx-auto pt-[110px] pb-[40px]">
        <div className="flex h-[200px]">
          <div className="w-[452px] shrink-0">
            <Text title="MOJERP aplikacija" width={360}>
              Izrada poslova spajanjem na <span className="text-[#ff3333]">MOJERP aplikaciju</span> direktno iz GEOPLUS-a onemogućit će bespotrebno klikanje i skakanje sa stranice na stranicu. Pristupom na stranicu <span className="text-[#ff3333]">MOJERP</span> moguće je posao izraditi do zadnjeg detalja, a kroz GEOPLUS možete posložiti elaborate i nastaviti raditi elaborat bez spajanja na sdge, do određenog trenutka.
            </Text>
          </div>
          <LoginShot />
          <div className="ml-auto"><PosloviShot /></div>
        </div>
        <div className="mt-[29px]"><Btn /></div>
      </section>

      <section className="bg-[#f4f4f4] pt-[111px] pb-[35px]">
        <div className="w-[1140px] mx-auto">
          <div className="flex h-[200px]">
            <div className="w-[426px] shrink-0">
              <Text title="UPRAVLJANJE RAVNINAMA" width={265}>
                Korisnici GEOPLUSa dobiju sve potrebno za izradu digitalnog elaborata, uključujući sve ravnine i blokove. Jednostavno je kontrolirati ravnine samo jednim klikom, što omogućava detaljan pregled, ali i olakšava ispis bilo za skicu izmjere, kopiju katastarskog plana ili snimljeno stanje.
              </Text>
            </div>
            <LayersShot />
            <div className="ml-[248px]"><PlanShot /></div>
          </div>
          <div className="mt-[70px] flex justify-center"><ToolbarShot /></div>
          <div className="mt-[1px]"><Btn /></div>
        </div>
      </section>

      <footer className="h-[88px] pt-[30px] text-center text-[13px] leading-[18px] text-[#777]">
        <b className="text-[#555]">© 2020 Copyright </b><b className="text-[#ff3333]">GEOSOFT d.o.o.</b> Sva prava pridržana.
      </footer>
    </div>
  );
}
